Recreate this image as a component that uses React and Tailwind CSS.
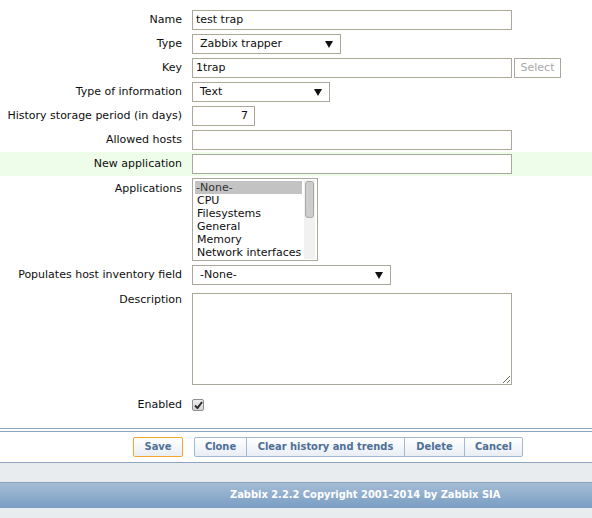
import React from 'react'

const font = { fontFamily: '"DejaVu Sans", Verdana, sans-serif' }
const boldFont = { fontFamily: '"DejaVu Sans Condensed", "DejaVu Sans", Verdana, sans-serif' }

function Arrow() {
  return (
    <svg width="8" height="8" viewBox="0 0 8 8" className="shrink-0">
      <path d="M0 1 H8 L4 8 Z" fill="#111" />
    </svg>
  )
}

function Row({ label, children, className = '', labelClass = 'self-center' }) {
  return (
    <div className={`flex ${className}`}>
      <div className={`w-[182px] shrink-0 text-right leading-[14px] whitespace-nowrap ${labelClass}`}>{label}</div>
      <div className="ml-[10px] flex">{children}</div>
    </div>
  )
}

function Input({ w, value = '', right = false }) {
  return (
    <div
      className={`h-[20px] border border-[#aca899] bg-white flex items-center px-[3px] ${right ? 'justify-end pr-[6px]' : ''}`}
      style={{ width: w }}
    >
      {value}
    </div>
  )
}

function Select({ w, value }) {
  return (
    <div
      className="h-[20px] border border-[#aca899] bg-white flex items-center justify-between pl-[7px] pr-[7px]"
      style={{ width: w }}
    >
      <span>{value}</span>
      <Arrow />
    </div>
  )
}

const apps = ['-None-', 'CPU', 'Filesystems', 'General', 'Memory', 'Network interfaces']

export default function App() {
  return (
    <div className="w-[592px] h-[518px] bg-white text-[11px] text-[#0e0e0e] flex flex-col overflow-hidden" style={font}>
      <div className="pt-[8px]">
        <Row label="Name" className="h-[24px] items-center">
          <Input w={320} value="test trap" />
        </Row>
        <Row label="Type" className="h-[24px] items-center">
          <Select w={149} value="Zabbix trapper" />
        </Row>
        <Row label="Key" className="h-[24px] items-center">
          <Input w={320} value="1trap" />
          <div className="ml-[2px] h-[20px] w-[47px] border border-[#aca899] bg-white flex items-center justify-center text-[#a8a8a8]">
            Select
          </div>
        </Row>
        <Row label="Type of information" className="h-[24px] items-center">
          <Select w={138} value="Text" />
        </Row>
        <Row label="History storage period (in days)" className="h-[24px] items-center">
          <Input w={63} value="7" right />
        </Row>
        <Row label="Allowed hosts" className="h-[24px] items-center">
          <Input w={320} />
        </Row>
        <Row label="New application" className="h-[24px] items-center bg-[#eefdea]">
          <Input w={320} />
        </Row>

        <Row label="Applications" className="pt-[2px] pb-[2px]" labelClass="pt-[4px]">
          <div className="h-[83px] w-[126px] border border-[#aca899] bg-white flex p-[2px]">
            <div className="flex-1 flex flex-col">
              {apps.map((a, i) => (
                <div
                  key={a}
                  className={`h-[13px] leading-[13px] pl-[1px] whitespace-nowrap ${i === 0 ? 'bg-[#c3c3c3] text-[#333]' : 'pl-[2px]'}`}
                >
                  {a}
                </div>
              ))}
            </div>
            <div className="w-[11px] ml-[2px] -my-[1px] bg-[#f1f1f1] flex justify-center pt-[1px]">
              <div className="w-[9px] h-[37px] rounded-[3px] border border-[#a9a9a9] bg-[#cdcdcd]" />
            </div>
          </div>
        </Row>

        <Row label="Populates host inventory field" className="h-[24px] items-center">
          <Select w={199} value="-None-" />
        </Row>

        <Row label="Description" className="pt-[6px]" labelClass="pt-[0px]">
          <textarea
            readOnly
            className="block h-[92px] w-[320px] border border-[#aca899] bg-white outline-none resize"
          />
        </Row>

        <Row label="Enabled" className="mt-[10px] h-[20px] items-center">
          <div className="w-[12px] h-[12px] rounded-[2px] border border-[#8e8e8e] bg-gradient-to-b from-[#eeeeee] to-[#d4d4d4] flex items-center justify-center">
            <svg width="9" height="8" viewBox="0 0 9 8">
              <path d="M1 4.5 L3.5 7 L8 1" stroke="#2e2e2e" strokeWidth="2" fill="none" />
            </svg>
          </div>
        </Row>
      </div>

      <div className="mt-[13px] border-t border-[#8fa5bf] h-[3px]" />
      <div className="border-t border-[#8fa5bf] h-[31px] flex items-start pt-[5px] pl-[133px]" style={boldFont}>
        <button className="h-[20px] w-[50px] border border-[#f5a52e] rounded-[2px] bg-gradient-to-b from-white to-[#e9eef4] text-[#4e6f97] font-bold">
          Save
        </button>
        <div className="ml-[11px] h-[20px] flex border border-[#a3b8d1] rounded-[2px] bg-gradient-to-b from-white to-[#e9eef4] text-[#4e6f97] font-bold">
          <div className="w-[52px] flex items-center justify-center border-r border-[#a3b8d1]">Clone</div>
          <div className="w-[158px] flex items-center justify-center border-r border-[#a3b8d1]">Clear history and trends</div>
          <div className="w-[60px] flex items-center justify-center border-r border-[#a3b8d1]">Delete</div>
          <div className="w-[57px] flex items-center justify-center">Cancel</div>
        </div>
      </div>
      <div className="border-t border-[#8fa5bf] h-[20px] bg-[#e9ecef]" />
      <div
        className="border-t border-[#8ca3bd] h-[26px] bg-gradient-to-b from-[#a6bdd6] to-[#799dc3] flex items-center pl-[230px] text-white font-bold"
        style={boldFont}
      >
        Zabbix 2.2.2 Copyright 2001-2014 by Zabbix SIA
      </div>
      <div className="flex-1 bg-[#e9ecef]" />
    </div>
  )
}
